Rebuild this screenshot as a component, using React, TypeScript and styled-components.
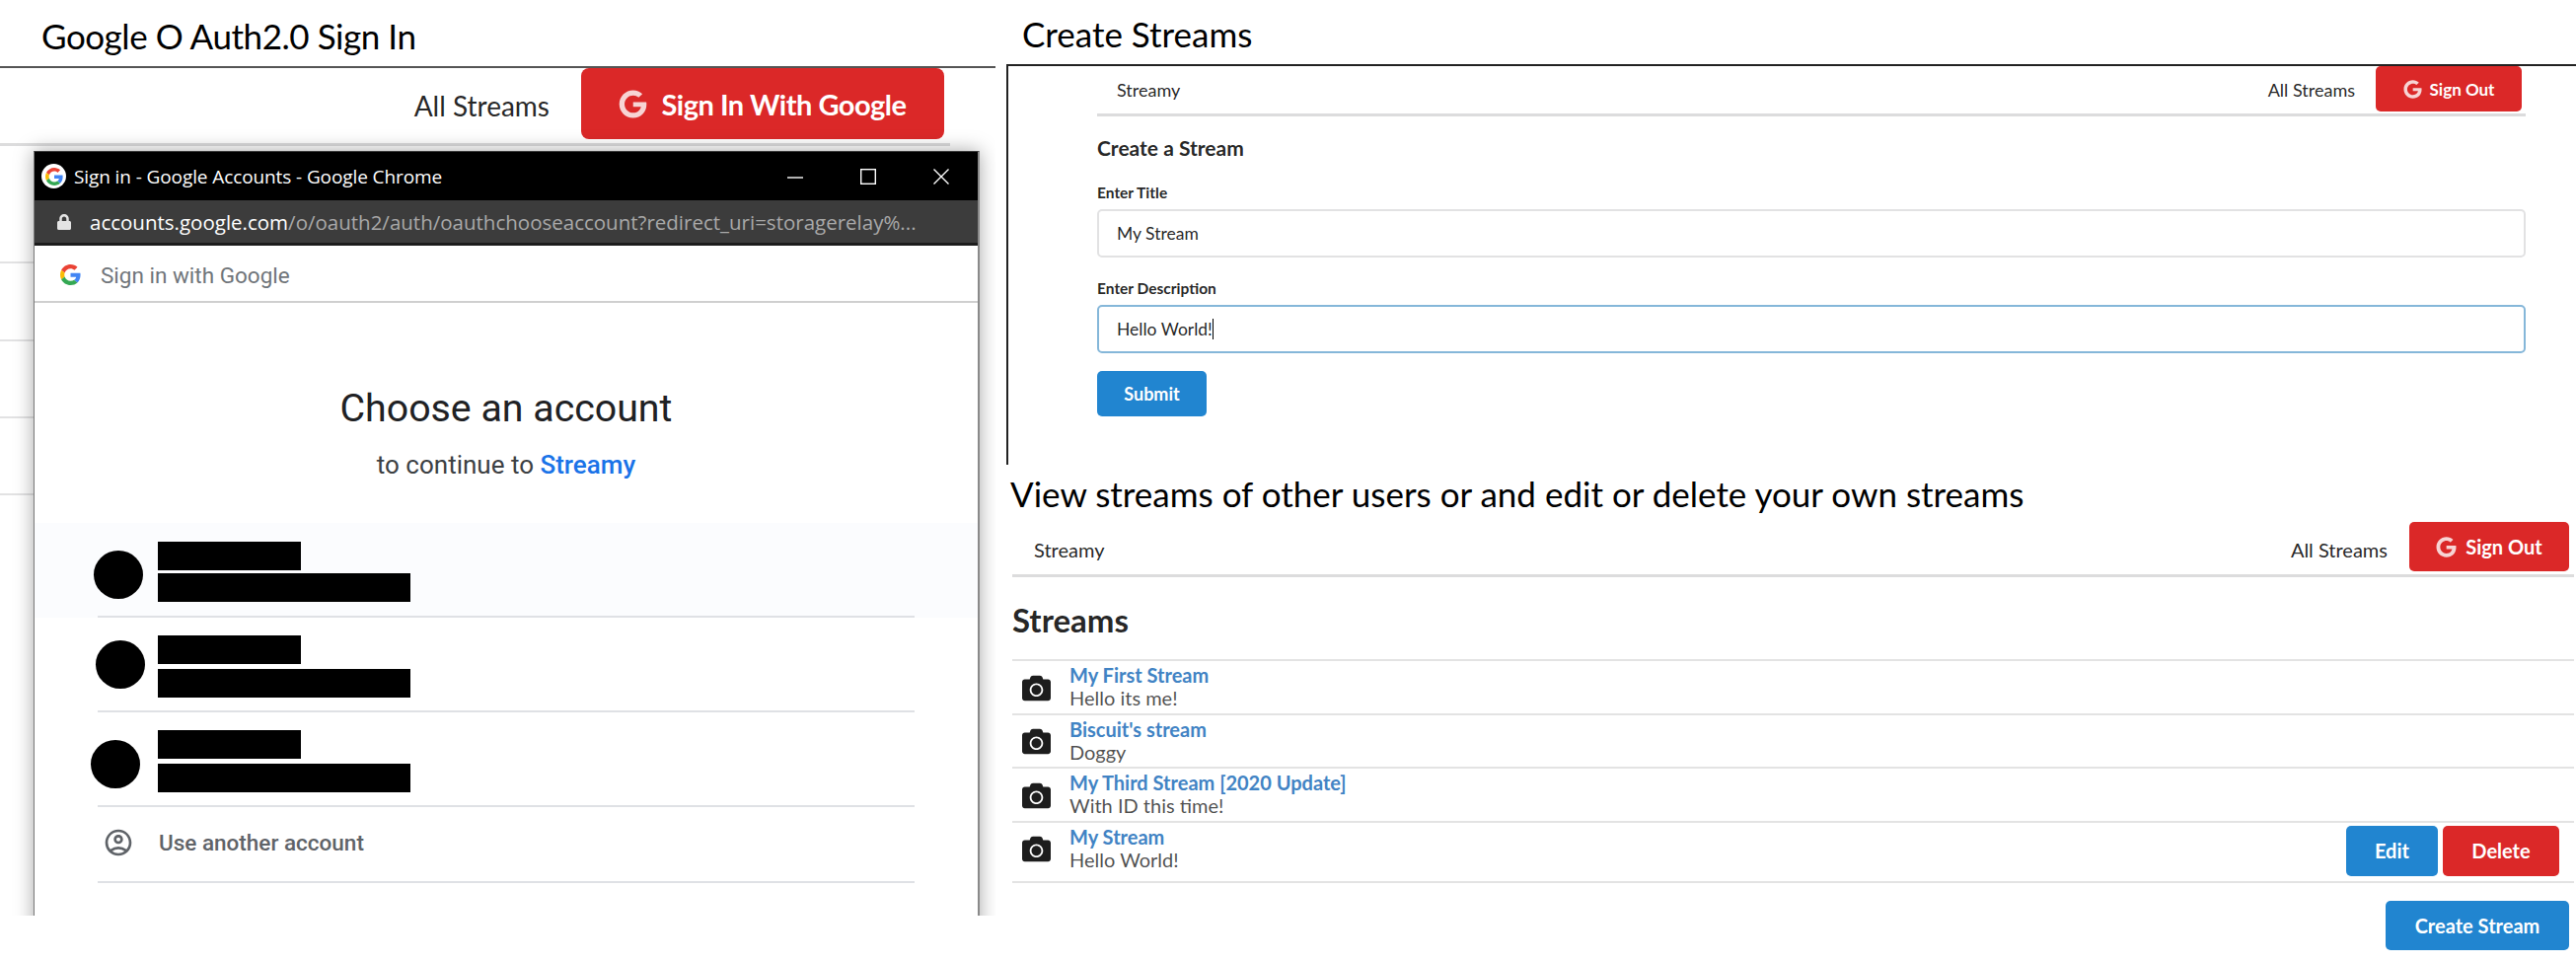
import styled, { createGlobalStyle } from "styled-components";
import { FaCamera, FaGoogle, FaLock } from "react-icons/fa";
import { MdOutlineAccountCircle } from "react-icons/md";

const GlobalStyle = createGlobalStyle`
  html, body {
    margin: 0;
    padding: 0;
    background: #fff;
  }
  body {
    font-family: "Lato", "Liberation Sans", sans-serif;
    width: 2611px;
    height: 975px;
    overflow: hidden;
  }
  * {
    box-sizing: border-box;
  }
`;

const Page = styled.div`
  display: grid;
  grid-template-columns: 1009px 1fr;
  width: 2611px;
  height: 975px;
`;

const LeftPanel = styled.section`
  position: relative;
  height: 928px;
  overflow: hidden;
`;

const LeftHeading = styled.h1`
  margin: 0;
  height: 69px;
  padding: 16px 0 0 42px;
  border-bottom: 2px solid #555;
  font-size: 35px;
  letter-spacing: -0.45px;
  line-height: 40px;
  font-weight: 400;
  color: #000;
`;

const RightPanel = styled.section`
  display: flex;
  flex-direction: column;
`;

const CaptionRow = styled.h1<{ $height: number; $left: number; $top: number }>`
  margin: 0;
  height: ${(p) => p.$height}px;
  padding: ${(p) => p.$top}px 0 0 ${(p) => p.$left}px;
  display: flex;
  align-items: center;
  font-size: 35px;
  font-weight: 400;
  color: #000;
  white-space: nowrap;
`;

const CreateBox = styled.div`
  margin-left: 11px;
  height: 406px;
  padding: 0 51px 0 90px;
  border-top: 2px solid #222;
  border-left: 2px solid #222;
`;

const StreamsBox = styled.div`
  margin-left: 17px;
  margin-right: 2px;
`;

const Nav = styled.nav<{ $height: number; $size: number; $gap: number; $pad: number; $width?: number }>`
  display: flex;
  align-items: flex-start;
  width: ${(p) => (p.$width ? `${p.$width}px` : "auto")};
  height: ${(p) => p.$height}px;
  padding-right: ${(p) => p.$pad}px;
  gap: ${(p) => p.$gap}px;
  border-bottom: 3px solid #dcdcdd;
  font-size: ${(p) => p.$size}px;
  color: rgba(0, 0, 0, 0.87);
`;

const Brand = styled.span<{ $left: number; $rise: number }>`
  margin: ${(p) => p.$rise}px auto 0 ${(p) => p.$left}px;
  line-height: 1.2;
`;

const NavLink = styled.span<{ $top: number }>`
  margin-top: ${(p) => p.$top}px;
  line-height: 1.2;
  white-space: nowrap;
`;

const Button = styled.div<{
  $color: "red" | "blue";
  $width: number;
  $height: number;
  $size: number;
  $radius?: number;
  $tight?: boolean;
}>`
  display: flex;
  align-items: center;
  justify-content: center;
  flex: none;
  width: ${(p) => p.$width}px;
  height: ${(p) => p.$height}px;
  border-radius: ${(p) => p.$radius ?? 5}px;
  background: ${(p) => (p.$color === "red" ? "#db2828" : "#2185d0")};
  color: #fff;
  font-size: ${(p) => p.$size}px;
  font-weight: 700;
  letter-spacing: ${(p) => (p.$tight ? "-0.5px" : "0")};
  white-space: nowrap;
`;

const GoogleGlyph = styled(FaGoogle)<{ $gap: number }>`
  margin-right: ${(p) => p.$gap}px;
  opacity: 0.8;
  flex: none;
`;

const BehindRow = styled.div<{ $top: number }>`
  position: absolute;
  left: 0;
  top: ${(p) => p.$top}px;
  width: 34px;
  border-top: 2px solid #e2e2e3;
`;

const ChromeWindow = styled.div`
  position: absolute;
  left: 34px;
  top: 153px;
  width: 959px;
  height: 820px;
  background: #fff;
  border: 1px solid #3a3a3a;
  border-left-color: #7a7a7a;
  border-right: 2px solid #8a8a8a;
  box-shadow: 0 0 18px rgba(0, 0, 0, 0.35);
`;

const TitleBar = styled.div`
  display: flex;
  align-items: center;
  height: 49px;
  background: #000;
  color: #fff;
  padding-left: 7px;
`;

const Favicon = styled.span`
  display: flex;
  align-items: center;
  justify-content: center;
  width: 25px;
  height: 25px;
  border-radius: 50%;
  background: #fff;
`;

const WindowTitle = styled.span`
  margin-left: 8px;
  font-family: "Open Sans", sans-serif;
  font-size: 19px;
  letter-spacing: -0.1px;
  flex: 1;
`;

const WindowControls = styled.div`
  display: flex;
  align-items: center;
  gap: 58px;
  margin-right: 29px;
`;

const ControlIcon = styled.svg`
  display: block;
  width: 16px;
  height: 16px;
  fill: none;
  stroke: #fff;
  stroke-width: 1.4;
`;

const AddressBar = styled.div`
  display: flex;
  align-items: center;
  height: 46px;
  background: #3c3c3c;
  border-bottom: 3px solid #1c1c1c;
  padding-left: 22px;
  font-family: "Open Sans", sans-serif;
  font-size: 20.5px;
  white-space: nowrap;
  color: #a9a9a9;
`;

const LockIcon = styled(FaLock)`
  margin-right: 18px;
  color: #e4e4e4;
  flex: none;
`;

const Host = styled.span`
  color: #fff;
`;

const SubHeader = styled.div`
  display: flex;
  align-items: center;
  gap: 20px;
  height: 58px;
  padding: 3px 0 0 26px;
  border-bottom: 2px solid #cfcfcf;
  font-family: "Roboto", sans-serif;
  font-size: 22.5px;
  color: #70757a;
`;

const ChooseTitle = styled.h2`
  margin: 82px 0 0;
  text-align: center;
  font-family: "Roboto", sans-serif;
  font-size: 39.3px;
  line-height: 50px;
  font-weight: 400;
  color: #202124;
`;

const ChooseSub = styled.p`
  margin: 16px 0 0;
  text-align: center;
  font-family: "Roboto", sans-serif;
  font-size: 26px;
  line-height: 32px;
  color: #3c4043;
`;

const AppName = styled.span`
  color: #1a73e8;
  font-weight: 500;
`;

const AccountList = styled.div`
  margin-top: 43px;
`;

const AccountRow = styled.div<{ $active?: boolean }>`
  padding: 0 64px;
  background: ${(p) => (p.$active ? "#fbfcfe" : "transparent")};
`;

const AccountInner = styled.div<{ $gap: number; $top: number; $bottom: number }>`
  display: flex;
  padding: ${(p) => p.$top}px 0 ${(p) => p.$bottom}px;
  border-bottom: 2px solid #dfe1e5;
  --bar-gap: ${(p) => p.$gap}px;
`;

const AvatarSlot = styled.div`
  width: 61px;
  flex: none;
`;

const Avatar = styled.div<{ $left: number; $top: number }>`
  width: 50px;
  height: 49px;
  margin: ${(p) => p.$top}px 0 0 ${(p) => p.$left}px;
  border-radius: 50%;
  background: #000;
`;

const Bars = styled.div`
  display: flex;
  flex-direction: column;
  gap: var(--bar-gap);
`;

const Bar = styled.div<{ $width: number }>`
  width: ${(p) => p.$width}px;
  height: 29px;
  background: #000;
`;

const AnotherRow = styled.div`
  display: flex;
  align-items: center;
  gap: 25px;
  height: 77px;
  margin: 0 64px;
  padding: 0 0 4px 5px;
  border-bottom: 2px solid #dfe1e5;
  font-family: "Roboto", sans-serif;
  font-weight: 500;
  font-size: 22.5px;
  color: #5f6368;
`;

const FormTitle = styled.h3`
  margin: 18px 0 0;
  font-size: 21px;
  line-height: 28px;
  font-weight: 700;
  color: rgba(0, 0, 0, 0.87);
`;

const FieldLabel = styled.label`
  display: block;
  margin: 0 0 7px;
  font-size: 15.5px;
  line-height: 20px;
  font-weight: 700;
  color: rgba(0, 0, 0, 0.87);
`;

const Field = styled.div<{ $focused?: boolean }>`
  display: flex;
  align-items: center;
  height: 49px;
  padding-left: 18px;
  border: 2px solid ${(p) => (p.$focused ? "#85b7d9" : "#e2e2e3")};
  border-radius: 5px;
  font-size: 17.5px;
  color: rgba(0, 0, 0, 0.87);
`;

const FieldGroup = styled.div`
  margin-top: 21px;
`;

const Caret = styled.span`
  display: inline-block;
  width: 1px;
  height: 21px;
  background: #000;
`;

const SubmitRow = styled.div`
  margin-top: 18px;
`;

const StreamsTitle = styled.h2`
  margin: 0;
  height: 83px;
  padding-top: 23px;
  font-size: 33px;
  line-height: 40px;
  font-weight: 700;
  color: rgba(0, 0, 0, 0.87);
`;

const StreamRow = styled.div`
  display: flex;
  align-items: flex-start;
  padding: 3px 0 3.67px;
  border-top: 2px solid #e3e3e3;
`;

const StreamInfo = styled.div`
  display: flex;
  align-items: center;
  flex: 1;
  height: 46px;
`;

const StreamIcon = styled(FaCamera)`
  margin: 2px 19px 0 10px;
  color: #1d1d1d;
  flex: none;
`;

const StreamText = styled.div`
  line-height: 23px;
`;

const StreamTitle = styled.div`
  font-size: 20px;
  font-weight: 700;
  color: #4183c4;
`;

const StreamDescription = styled.div`
  font-size: 20px;
  color: rgba(0, 0, 0, 0.7);
`;

const StreamActions = styled.div`
  display: flex;
  gap: 5px;
  margin: 0 15px 1.33px 0;
`;

const ListEnd = styled.div`
  border-top: 2px solid #e3e3e3;
`;

const CreateRow = styled.div`
  display: flex;
  justify-content: flex-end;
  margin: 18px 5px 0 0;
`;

function GoogleLogo({ size }: { size: number }) {
  return (
    <svg width={size} height={size} viewBox="0 0 48 48">
      <path fill="#EA4335" d="M24 9.5c3.54 0 6.71 1.22 9.21 3.6l6.85-6.85C35.9 2.38 30.47 0 24 0 14.62 0 6.51 5.38 2.56 13.22l7.98 6.19C12.43 13.72 17.74 9.5 24 9.5z" />
      <path fill="#4285F4" d="M46.98 24.55c0-1.57-.15-3.09-.38-4.55H24v9.02h12.94c-.58 2.96-2.26 5.48-4.78 7.18l7.73 6c4.51-4.18 7.09-10.36 7.09-17.65z" />
      <path fill="#FBBC05" d="M10.53 28.59c-.48-1.45-.76-2.99-.76-4.59s.27-3.14.76-4.59l-7.98-6.19C.92 16.46 0 20.12 0 24c0 3.88.92 7.54 2.56 10.78l7.97-6.19z" />
      <path fill="#34A853" d="M24 48c6.48 0 11.93-2.13 15.89-5.81l-7.73-6c-2.15 1.45-4.92 2.3-8.16 2.3-6.26 0-11.57-4.22-13.47-9.91l-7.98 6.19C6.51 42.62 14.62 48 24 48z" />
    </svg>
  );
}

const accounts = [
  { id: 1, active: true, gap: 3, top: 19, bottom: 14, avatarLeft: -4, avatarTop: 9 },
  { id: 2, active: false, gap: 5, top: 18, bottom: 13, avatarLeft: -2, avatarTop: 5 },
  { id: 3, active: false, gap: 5, top: 18, bottom: 13, avatarLeft: -7, avatarTop: 10 },
];

const streams = [
  { title: "My First Stream", description: "Hello its me!" },
  { title: "Biscuit's stream", description: "Doggy" },
  { title: "My Third Stream [2020 Update]", description: "With ID this time!" },
  { title: "My Stream", description: "Hello World!", own: true },
];

function App() {
  return (
    <Page>
      <GlobalStyle />
      <LeftPanel>
        <LeftHeading>Google O Auth2.0 Sign In</LeftHeading>
        <Nav $height={79} $size={28} $gap={32} $pad={6} $width={963}>
          <Brand $left={0} $rise={0} />
          <NavLink $top={22}>All Streams</NavLink>
          <Button $color="red" $width={368} $height={72} $size={29} $radius={8} $tight>
            <GoogleGlyph size={29} $gap={14} />
            Sign In With Google
          </Button>
        </Nav>

        {[265, 344, 422, 500].map((top) => (
          <BehindRow key={top} $top={top} />
        ))}

        <ChromeWindow>
          <TitleBar>
            <Favicon>
              <GoogleLogo size={18} />
            </Favicon>
            <WindowTitle>Sign in - Google Accounts - Google Chrome</WindowTitle>
            <WindowControls>
              <ControlIcon viewBox="0 0 16 16">
                <path d="M0 9h16" />
              </ControlIcon>
              <ControlIcon viewBox="0 0 16 16">
                <rect x="0.7" y="0.7" width="14.6" height="14.6" />
              </ControlIcon>
              <ControlIcon viewBox="0 0 16 16">
                <path d="M0.5 0.5l15 15M15.5 0.5l-15 15" />
              </ControlIcon>
            </WindowControls>
          </TitleBar>
          <AddressBar>
            <LockIcon size={16} />
            <Host>accounts.google.com</Host>
            /o/oauth2/auth/oauthchooseaccount?redirect_uri=storagerelay%...
          </AddressBar>
          <SubHeader>
            <GoogleLogo size={21} />
            Sign in with Google
          </SubHeader>
          <ChooseTitle>Choose an account</ChooseTitle>
          <ChooseSub>
            to continue to <AppName>Streamy</AppName>
          </ChooseSub>
          <AccountList>
            {accounts.map((account) => (
              <AccountRow key={account.id} $active={account.active}>
                <AccountInner $gap={account.gap} $top={account.top} $bottom={account.bottom}>
                  <AvatarSlot>
                    <Avatar $left={account.avatarLeft} $top={account.avatarTop} />
                  </AvatarSlot>
                  <Bars>
                    <Bar $width={145} />
                    <Bar $width={256} />
                  </Bars>
                </AccountInner>
              </AccountRow>
            ))}
            <AnotherRow>
              <MdOutlineAccountCircle size={32} />
              Use another account
            </AnotherRow>
          </AccountList>
        </ChromeWindow>
      </LeftPanel>

      <RightPanel>
        <CaptionRow $height={65} $left={27} $top={3}>
          Create Streams
        </CaptionRow>
        <CreateBox>
          <Nav $height={51} $size={18} $gap={21} $pad={4}>
            <Brand $left={20} $rise={14}>Streamy</Brand>
            <NavLink $top={14}>All Streams</NavLink>
            <Button $color="red" $width={148} $height={46} $size={17}>
              <GoogleGlyph size={19} $gap={8} />
              Sign Out
            </Button>
          </Nav>
          <FormTitle>Create a Stream</FormTitle>
          <FieldGroup>
            <FieldLabel>Enter Title</FieldLabel>
            <Field>My Stream</Field>
          </FieldGroup>
          <FieldGroup>
            <FieldLabel>Enter Description</FieldLabel>
            <Field $focused>
              Hello World!
              <Caret />
            </Field>
          </FieldGroup>
          <SubmitRow>
            <Button $color="blue" $width={111} $height={46} $size={18}>
              Submit
            </Button>
          </SubmitRow>
        </CreateBox>

        <CaptionRow $height={58} $left={15} $top={0}>
          View streams of other users or and edit or delete your own streams
        </CaptionRow>
        <StreamsBox>
          <Nav $height={56} $size={20} $gap={22} $pad={5}>
            <Brand $left={22} $rise={16}>Streamy</Brand>
            <NavLink $top={16}>All Streams</NavLink>
            <Button $color="red" $width={162} $height={50} $size={20}>
              <GoogleGlyph size={21} $gap={9} />
              Sign Out
            </Button>
          </Nav>
          <StreamsTitle>Streams</StreamsTitle>
          {streams.map((stream) => (
            <StreamRow key={stream.title}>
              <StreamInfo>
                <StreamIcon size={29} />
                <StreamText>
                  <StreamTitle>{stream.title}</StreamTitle>
                  <StreamDescription>{stream.description}</StreamDescription>
                </StreamText>
              </StreamInfo>
              {stream.own && (
                <StreamActions>
                  <Button $color="blue" $width={93} $height={51} $size={20}>
                    Edit
                  </Button>
                  <Button $color="red" $width={118} $height={51} $size={20}>
                    Delete
                  </Button>
                </StreamActions>
              )}
            </StreamRow>
          ))}
          <ListEnd />
          <CreateRow>
            <Button $color="blue" $width={186} $height={50} $size={20}>
              Create Stream
            </Button>
          </CreateRow>
        </StreamsBox>
      </RightPanel>
    </Page>
  );
}

export default App;
